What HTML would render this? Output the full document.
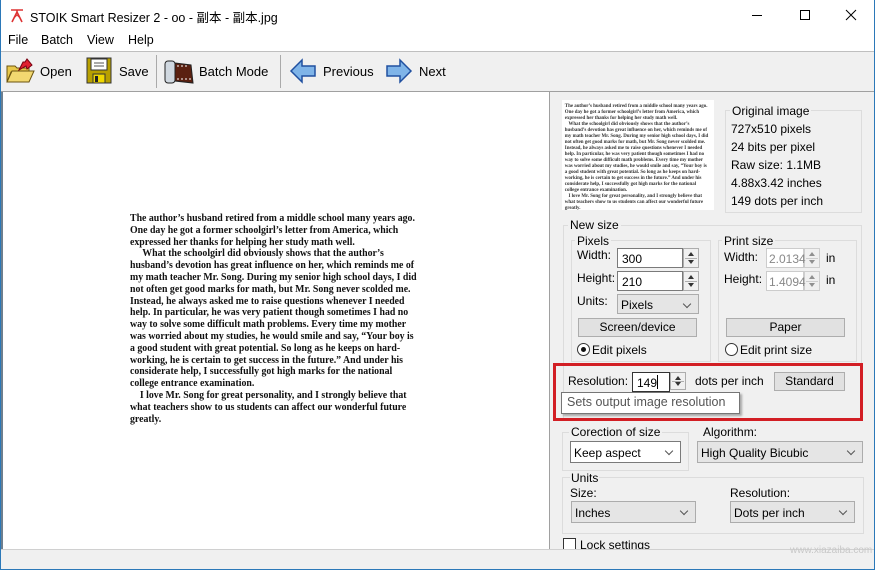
<!DOCTYPE html>
<html><head><meta charset="utf-8"><style>
*{box-sizing:border-box;margin:0;padding:0}
body{width:875px;height:570px;position:relative;overflow:hidden;background:#f0f0f0;font-family:"Liberation Sans","Noto Sans CJK SC",sans-serif;font-size:12px;color:#000}
.a{position:absolute}
.t{position:absolute;white-space:nowrap}
.grp{position:absolute;border:1px solid #dcdcdc}
.inp{position:absolute;background:#fff;border:1px solid #7a7a7a;padding:3px 4px;font-size:12px}
.spin{position:absolute;border:1px solid #adadad;background:#f0f0f0;width:16px}
.spin:before{content:"";position:absolute;left:4px;top:3px;border:3px solid transparent;border-bottom:4px solid #333;border-top:0}
.spin:after{content:"";position:absolute;left:4px;bottom:3px;border:3px solid transparent;border-top:4px solid #333;border-bottom:0}
.spin i{position:absolute;left:1px;right:1px;top:50%;border-top:1px solid #adadad}
.btn{position:absolute;background:#e1e1e1;border:1px solid #adadad;text-align:center;font-size:12px}
.sel{position:absolute;background:#e5e5e5;border:1px solid #acacac;padding:3px 3px;font-size:12px}
.sel.w{background:#fff;border-color:#7a7a7a}
.sel:after{content:"";position:absolute;right:8px;top:6px;width:5px;height:5px;border-right:1px solid #555;border-bottom:1px solid #555;transform:rotate(45deg)}
.doc{position:absolute;left:130px;top:213px;font-family:"Liberation Serif",serif;font-weight:bold;font-size:10.4px;line-height:11.8px;color:#111;white-space:nowrap;transform:scaleX(.947);transform-origin:0 0}
.thumb{position:absolute;left:562px;top:100px;width:152px;height:110px;background:#fff;overflow:hidden}
.thumb div{font-family:"Liberation Serif",serif;font-weight:bold;font-size:5.3px;line-height:6px;color:#333;padding:3px 3px;white-space:nowrap;transform:scaleX(.93);transform-origin:0 0}
</style></head><body>
<!-- title bar -->
<div class="a" style="left:0;top:0;width:875px;height:52px;background:#fff"></div>
<svg class="a" style="left:9px;top:7px" width="16" height="16" viewBox="0 0 16 16"><path d="M2 3h12M8 3v2M8 5L3 15M8 5l5 10" stroke="#d33" stroke-width="1.6" fill="none"/><path d="M5 11l3-3 3 3" stroke="#d33" fill="none"/></svg>
<div class="t" style="left:30px;top:7px;font-size:12.5px">STOIK Smart Resizer 2 - oo - 副本 - 副本.jpg</div>
<div class="a" style="left:752px;top:15px;width:10px;height:1px;background:#000"></div>
<div class="a" style="left:800px;top:10px;width:10px;height:10px;border:1px solid #000"></div>
<svg class="a" style="left:845px;top:9px" width="12" height="12"><path d="M1 1L11 11M11 1L1 11" stroke="#000"/></svg>
<div class="t" style="left:8px;top:33px;font-size:12.5px">File</div>
<div class="t" style="left:41px;top:33px;font-size:12.5px">Batch</div>
<div class="t" style="left:87px;top:33px;font-size:12.5px">View</div>
<div class="t" style="left:128px;top:33px;font-size:12.5px">Help</div>
<!-- toolbar -->
<div class="a" style="left:0;top:51px;width:875px;height:1px;background:#bfbfbf"></div>
<div class="a" style="left:0;top:52px;width:875px;height:40px;background:#f0f0f0"></div>
<div class="a" style="left:0;top:91px;width:875px;height:1px;background:#a0a0a0"></div>
<svg class="a" style="left:5px;top:58px" width="30" height="26" viewBox="0 0 30 26"><path d="M2 8h8l2 2h12v4H6L2 24z" fill="#e8c84a" stroke="#6b5410"/><path d="M2 24L7 13h22l-5 11z" fill="#f2d870" stroke="#6b5410"/><path d="M14 12l4-8h2l2-3 5 6-5 4-1-3z" fill="#e02030" stroke="#7a0010"/></svg>
<div class="t" style="left:40px;top:64px;font-size:13px">Open</div>
<svg class="a" style="left:86px;top:57px" width="26" height="27" viewBox="0 0 26 27"><rect x="1" y="1" width="24" height="25" fill="#b8a000" stroke="#333"/><rect x="5" y="2" width="16" height="11" fill="#fff" stroke="#333"/><path d="M8 6h10M8 9h10" stroke="#555"/><rect x="7" y="17" width="12" height="9" fill="#f0d800" stroke="#333"/><rect x="9" y="19" width="3" height="6" fill="#222"/></svg>
<div class="t" style="left:119px;top:64px;font-size:13px">Save</div>
<div class="a" style="left:156px;top:55px;width:1px;height:33px;background:#aaa"></div>
<svg class="a" style="left:163px;top:57px" width="32" height="28" viewBox="0 0 32 28"><rect x="2" y="4" width="10" height="22" rx="3" fill="#d0d8e0" stroke="#222"/><path d="M12 6l16 2 2 18-18-2z" fill="#5a2010" stroke="#222"/><path d="M14 9h12M14 22h14" stroke="#fff" stroke-dasharray="2 2"/></svg>
<div class="t" style="left:199px;top:64px;font-size:13px">Batch Mode</div>
<div class="a" style="left:280px;top:55px;width:1px;height:33px;background:#aaa"></div>
<svg class="a" style="left:289px;top:58px" width="28" height="26" viewBox="0 0 28 26"><path d="M2 13L13 2v6h13v10H13v6z" fill="#7fb4e8" stroke="#2050a0" stroke-width="1.5"/></svg>
<div class="t" style="left:323px;top:64px;font-size:13px">Previous</div>
<svg class="a" style="left:385px;top:58px" width="28" height="26" viewBox="0 0 28 26"><path d="M26 13L15 2v6H2v10h13v6z" fill="#7fb4e8" stroke="#2050a0" stroke-width="1.5"/></svg>
<div class="t" style="left:419px;top:64px;font-size:13px">Next</div>
<!-- preview -->
<div class="a" style="left:1px;top:92px;width:549px;height:457px;background:#fff;border-left:2px solid #6d7f8f;border-right:1px solid #a0a0a0"></div>
<div class="doc">The author’s husband retired from a middle school many years ago.<br>One day he got a former schoolgirl’s letter from America, which<br>expressed her thanks for helping her study math well.<br>&nbsp;&nbsp;&nbsp;&nbsp;&nbsp;What the schoolgirl did obviously shows that the author’s<br>husband’s devotion has great influence on her, which reminds me of<br>my math teacher Mr. Song. During my senior high school days, I did<br>not often get good marks for math, but Mr. Song never scolded me.<br>Instead, he always asked me to raise questions whenever I needed<br>help. In particular, he was very patient though sometimes I had no<br>way to solve some difficult math problems. Every time my mother<br>was worried about my studies, he would smile and say, “Your boy is<br>a good student with great potential. So long as he keeps on hard-<br>working, he is certain to get success in the future.” And under his<br>considerate help, I successfully got high marks for the national<br>college entrance examination.<br>&nbsp;&nbsp;&nbsp;&nbsp;I love Mr. Song for great personality, and I strongly believe that<br>what teachers show to us students can affect our wonderful future<br>greatly.</div>
<!-- right panel -->
<div class="thumb"><div>The author’s husband retired from a middle school many years ago.<br>One day he got a former schoolgirl’s letter from America, which<br>expressed her thanks for helping her study math well.<br>&nbsp;&nbsp;&nbsp;What the schoolgirl did obviously shows that the author’s<br>husband’s devotion has great influence on her, which reminds me of<br>my math teacher Mr. Song. During my senior high school days, I did<br>not often get good marks for math, but Mr. Song never scolded me.<br>Instead, he always asked me to raise questions whenever I needed<br>help. In particular, he was very patient though sometimes I had no<br>way to solve some difficult math problems. Every time my mother<br>was worried about my studies, he would smile and say, “Your boy is<br>a good student with great potential. So long as he keeps on hard-<br>working, he is certain to get success in the future.” And under his<br>considerate help, I successfully got high marks for the national<br>college entrance examination.<br>&nbsp;&nbsp;&nbsp;I love Mr. Song for great personality, and I strongly believe that<br>what teachers show to us students can affect our wonderful future<br>greatly.</div></div>
<div class="grp" style="left:725px;top:110px;width:137px;height:103px"></div>
<div class="t" style="left:730px;top:104px;background:#f0f0f0;padding:0 2px">Original image</div>
<div class="t" style="left:731px;top:122px">727x510 pixels</div>
<div class="t" style="left:731px;top:140px">24 bits per pixel</div>
<div class="t" style="left:731px;top:158px">Raw size: 1.1MB</div>
<div class="t" style="left:731px;top:176px">4.88x3.42 inches</div>
<div class="t" style="left:731px;top:194px">149 dots per inch</div>
<div class="grp" style="left:563px;top:225px;width:299px;height:195px"></div>
<div class="t" style="left:568px;top:218px;background:#f0f0f0;padding:0 2px">New size</div>
<div class="grp" style="left:571px;top:240px;width:140px;height:122px"></div>
<div class="t" style="left:575px;top:234px;background:#f0f0f0;padding:0 2px">Pixels</div>
<div class="t" style="left:577px;top:248px">Width:</div>
<div class="inp" style="left:617px;top:248px;width:66px;height:20px">300</div>
<div class="spin" style="left:683px;top:248px;height:20px"><i></i></div>
<div class="t" style="left:577px;top:271px">Height:</div>
<div class="inp" style="left:617px;top:271px;width:66px;height:20px">210</div>
<div class="spin" style="left:683px;top:271px;height:20px"><i></i></div>
<div class="t" style="left:577px;top:294px">Units:</div>
<div class="sel" style="left:617px;top:294px;width:82px;height:20px">Pixels</div>
<div class="btn" style="left:578px;top:318px;width:119px;height:19px;line-height:17px">Screen/device</div>
<div class="a" style="left:577px;top:343px;width:13px;height:13px;border:1px solid #333;border-radius:50%;background:#fff"></div>
<div class="a" style="left:581px;top:347px;width:5px;height:5px;border-radius:50%;background:#111"></div>
<div class="t" style="left:592px;top:343px">Edit pixels</div>
<div class="grp" style="left:718px;top:240px;width:139px;height:122px"></div>
<div class="t" style="left:722px;top:234px;background:#f0f0f0;padding:0 2px">Print size</div>
<div class="t" style="left:724px;top:250px">Width:</div>
<div class="inp" style="left:766px;top:248px;width:38px;height:20px;border-color:#ccc;color:#888;padding:3px 2px">2.0134</div>
<div class="spin" style="left:804px;top:248px;height:20px;opacity:.5"><i></i></div>
<div class="t" style="left:826px;top:251px">in</div>
<div class="t" style="left:724px;top:272px">Height:</div>
<div class="inp" style="left:766px;top:271px;width:38px;height:20px;border-color:#ccc;color:#888;padding:3px 2px">1.4094</div>
<div class="spin" style="left:804px;top:271px;height:20px;opacity:.5"><i></i></div>
<div class="t" style="left:826px;top:273px">in</div>
<div class="btn" style="left:726px;top:318px;width:119px;height:19px;line-height:17px">Paper</div>
<div class="a" style="left:725px;top:343px;width:13px;height:13px;border:1px solid #333;border-radius:50%;background:#fff"></div>
<div class="t" style="left:740px;top:343px">Edit print size</div>
<!-- red highlight -->
<div class="a" style="left:553px;top:363px;width:310px;height:58px;border:3px solid #d21e24"></div>
<div class="t" style="left:568px;top:374px">Resolution:</div>
<div class="inp" style="left:632px;top:372px;width:38px;height:20px;border-color:#333">149 </div>
<div class="a" style="left:657px;top:375px;width:1px;height:14px;background:#000"></div>
<div class="spin" style="left:670px;top:372px;height:18px"><i></i></div>
<div class="t" style="left:695px;top:374px">dots per inch</div>
<div class="btn" style="left:774px;top:372px;width:71px;height:19px;line-height:17px">Standard</div>
<div class="a" style="left:561px;top:392px;width:179px;height:22px;background:#fff;border:1px solid #767676;box-shadow:2px 2px 2px rgba(0,0,0,.3)"></div>
<div class="t" style="left:567px;top:395px;font-size:12.5px;color:#555">Sets output image resolution</div>
<!-- lower -->
<div class="grp" style="left:562px;top:432px;width:127px;height:39px"></div>
<div class="t" style="left:569px;top:425px;background:#f0f0f0;padding:0 2px">Corection of size</div>
<div class="sel w" style="left:570px;top:441px;width:111px;height:22px;padding:4px 3px">Keep aspect</div>
<div class="t" style="left:703px;top:425px">Algorithm:</div>
<div class="sel" style="left:697px;top:441px;width:166px;height:22px;padding:4px 3px">High Quality Bicubic</div>
<div class="grp" style="left:562px;top:477px;width:302px;height:57px"></div>
<div class="t" style="left:570px;top:471px;background:#f0f0f0;padding:0 1px">Units</div>
<div class="t" style="left:570px;top:486px">Size:</div>
<div class="sel" style="left:571px;top:501px;width:125px;height:22px;padding:4px 3px">Inches</div>
<div class="t" style="left:730px;top:486px">Resolution:</div>
<div class="sel" style="left:730px;top:501px;width:125px;height:22px;padding:4px 3px">Dots per inch</div>
<div class="a" style="left:563px;top:538px;width:13px;height:13px;border:1px solid #333;background:#fff"></div>
<div class="t" style="left:580px;top:538px">Lock settings</div>
<!-- status bar -->
<div class="a" style="left:0;top:549px;width:875px;height:21px;background:#f0f0f0;border-top:1px solid #d0d0d0"></div>
<div class="a" style="left:0;top:0;width:1px;height:570px;background:#2b78b8"></div>
<div class="a" style="left:874px;top:0;width:1px;height:570px;background:#2b78b8"></div>
<div class="a" style="left:0;top:569px;width:875px;height:1px;background:#2b78b8"></div>
<div class="t" style="left:790px;top:545px;font-size:10px;color:#c8c8c8">www.xiazaiba.com</div>
</body></html>
